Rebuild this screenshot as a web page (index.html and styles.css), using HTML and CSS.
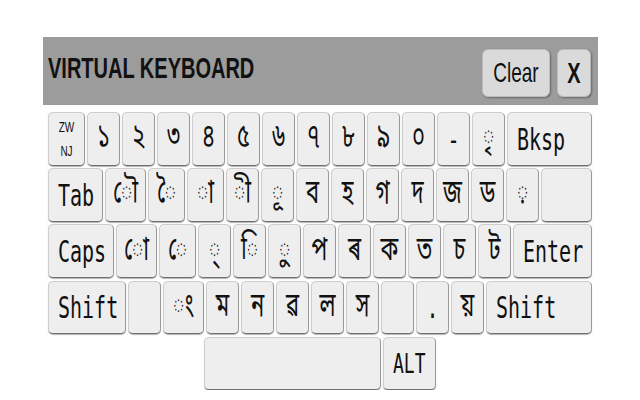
FILE: index.html
```html
<!DOCTYPE html>
<html lang="as">
<head>
  <meta charset="UTF-8">
  <meta name="viewport" content="width=device-width, initial-scale=1.0">
  <title>Virtual Keyboard</title>
  <link rel="stylesheet" href="styles.css">
</head>
<body>

<div class="keyboard">
  <div class="kb-header">
    <h1 class="kb-title"><span class="tall">VIRTUAL KEYBOARD</span></h1>
    <div class="kb-actions">
      <button class="hbtn hbtn-clear"><span class="tall">Clear</span></button>
      <button class="hbtn hbtn-close"><span class="tall">X</span></button>
    </div>
  </div>

  <div class="kb-keys">
    <div class="kb-row">
      <button class="key key-zw"><span class="zw">ZW<br>NJ</span></button>
      <button class="key"><span class="tall">১</span></button>
      <button class="key"><span class="tall">২</span></button>
      <button class="key"><span class="tall">৩</span></button>
      <button class="key"><span class="tall">৪</span></button>
      <button class="key"><span class="tall">৫</span></button>
      <button class="key"><span class="tall">৬</span></button>
      <button class="key"><span class="tall">৭</span></button>
      <button class="key"><span class="tall">৮</span></button>
      <button class="key"><span class="tall">৯</span></button>
      <button class="key"><span class="tall">০</span></button>
      <button class="key key-sign"><span class="tall">-</span></button>
      <button class="key"><span class="tall">◌ৃ</span></button>
      <button class="key key-grow key-text"><span class="tall">Bksp</span></button>
    </div>

    <div class="kb-row">
      <button class="key key-tab key-text"><span class="tall">Tab</span></button>
      <button class="key key-mark-wide"><span class="tall">◌ৌ</span></button>
      <button class="key key-mark"><span class="tall">◌ৈ</span></button>
      <button class="key key-mark"><span class="tall">◌া</span></button>
      <button class="key"><span class="tall">◌ী</span></button>
      <button class="key"><span class="tall">◌ূ</span></button>
      <button class="key"><span class="tall">ব</span></button>
      <button class="key"><span class="tall">হ</span></button>
      <button class="key"><span class="tall">গ</span></button>
      <button class="key"><span class="tall">দ</span></button>
      <button class="key"><span class="tall">জ</span></button>
      <button class="key"><span class="tall">ড</span></button>
      <button class="key"><span class="tall">◌়</span></button>
      <button class="key key-grow"></button>
    </div>

    <div class="kb-row">
      <button class="key key-caps key-text"><span class="tall">Caps</span></button>
      <button class="key key-mark-wide"><span class="tall">◌ো</span></button>
      <button class="key key-mark"><span class="tall">◌ে</span></button>
      <button class="key"><span class="tall">◌্</span></button>
      <button class="key"><span class="tall">◌ি</span></button>
      <button class="key"><span class="tall">◌ু</span></button>
      <button class="key"><span class="tall">প</span></button>
      <button class="key"><span class="tall">ৰ</span></button>
      <button class="key"><span class="tall">ক</span></button>
      <button class="key"><span class="tall">ত</span></button>
      <button class="key"><span class="tall">চ</span></button>
      <button class="key"><span class="tall">ট</span></button>
      <button class="key key-grow key-text"><span class="tall">Enter</span></button>
    </div>

    <div class="kb-row">
      <button class="key key-shift key-text"><span class="tall">Shift</span></button>
      <button class="key"></button>
      <button class="key key-mark-wide"><span class="tall">◌ং</span></button>
      <button class="key"><span class="tall">ম</span></button>
      <button class="key"><span class="tall">ন</span></button>
      <button class="key"><span class="tall">ৱ</span></button>
      <button class="key"><span class="tall">ল</span></button>
      <button class="key"><span class="tall">স</span></button>
      <button class="key"></button>
      <button class="key key-sign"><span class="tall">.</span></button>
      <button class="key"><span class="tall">য়</span></button>
      <button class="key key-grow key-text"><span class="tall">Shift</span></button>
    </div>

    <div class="kb-row kb-row-bottom">
      <button class="key key-space"></button>
      <button class="key key-alt key-text"><span class="tall">ALT</span></button>
    </div>
  </div>
</div>

</body>
</html>
```

FILE: styles.css
```css
body {
  margin: 0;
  background-color: #fff;
  font-family: "Liberation Sans", Arial, sans-serif;
}

.keyboard {
  width: 555px;
  margin: 37px 0 0 43px;
}

.kb-header {
  height: 68px;
  background-color: #9c9c9c;
  display: flex;
  align-items: center;
  justify-content: space-between;
  padding: 0 7px 0 5px;
}

.kb-title {
  margin: 0 0 5px 0;
  font-size: 20px;
  font-weight: bold;
  color: #111;
}

.tall {
  display: inline-block;
  transform: scaleY(1.5);
}

.kb-actions {
  display: flex;
  gap: 7px;
  margin-top: 4px;
}

.hbtn {
  height: 48px;
  padding: 0;
  background-color: #dadada;
  border: 1px solid #bdbdbd;
  border-radius: 6px;
  box-shadow: 1px 1px 2px rgba(0, 0, 0, 0.35);
  font-family: "Liberation Sans", Arial, sans-serif;
  color: #111;
  cursor: pointer;
}

.hbtn-clear {
  width: 68px;
  font-size: 19px;
}

.hbtn-close {
  width: 34px;
  font-size: 20px;
  font-weight: bold;
}

.kb-keys {
  display: flex;
  flex-direction: column;
  gap: 2.7px;
  padding: 7px 6px 0 5px;
}

.kb-row {
  display: flex;
  gap: 2px;
  height: 53.5px;
}

.kb-row-bottom {
  padding-left: 156px;
}

.key {
  flex: none;
  width: 33px;
  height: 100%;
  padding: 0;
  background-color: #eeeeee;
  border: 1px solid #cdcdcd;
  border-right-color: #999;
  border-bottom-color: #6f6f6f;
  border-radius: 5px;
  box-shadow: 0 1px 1px rgba(0, 0, 0, 0.3);
  font-family: "DejaVu Sans Mono", "Noto Sans Bengali", monospace;
  font-size: 22px;
  color: #111;
  cursor: pointer;
}

.key-text {
  text-align: left;
  padding-left: 9px;
  font-size: 20px;
}

.key-sign {
  font-size: 20px;
}

.key-zw { width: 37px; }
.key-mark { width: 37px; }
.key-mark-wide { width: 41px; }
.key-tab { width: 55px; }
.key-caps { width: 66px; }
.key-shift { width: 78px; }
.key-space { width: 177px; }
.key-alt { width: 53px; font-size: 18px; }

.key-grow {
  flex: 1;
}

.zw {
  display: inline-block;
  font-family: "Liberation Sans", Arial, sans-serif;
  font-size: 10px;
  line-height: 17px;
  transform: scaleY(1.4);
}
```
